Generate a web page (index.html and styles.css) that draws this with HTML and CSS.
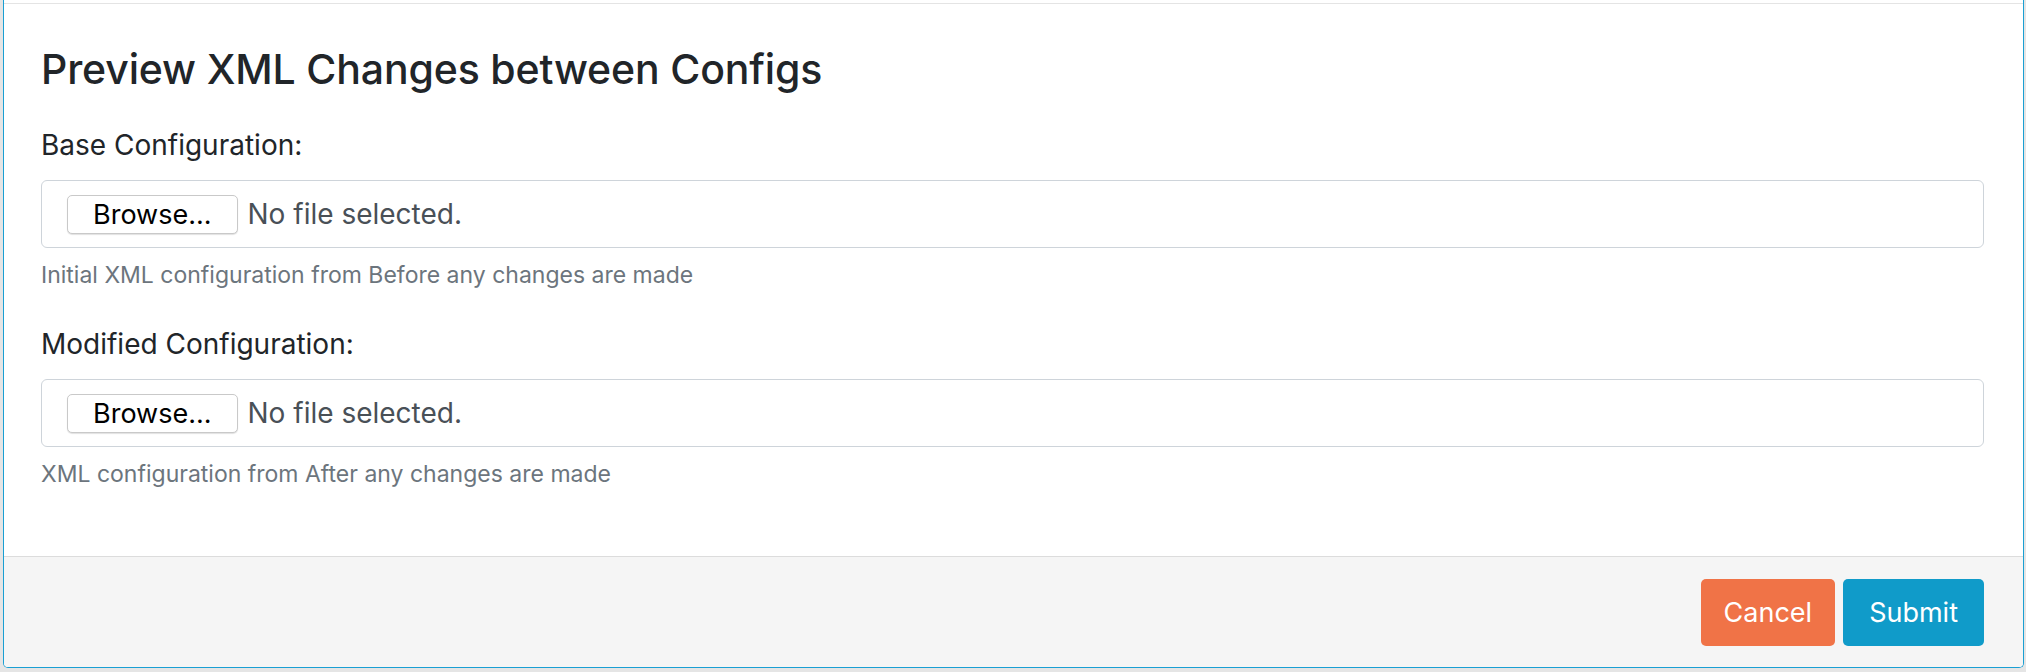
FILE: index.html
```html
<!DOCTYPE html>
<html lang="en">
<head>
<meta charset="utf-8">
<title>Preview XML Changes between Configs</title>
<link rel="stylesheet" href="styles.css">
</head>
<body>
<div class="modal">
  <div class="modal-top"></div>
  <div class="modal-body">
    <h5 class="modal-title">Preview XML Changes between Configs</h5>
    <div class="form-group">
      <label class="label">Base Configuration:</label>
      <div class="file-box">
        <span class="browse">Browse...</span>
        <span class="file-name">No file selected.</span>
      </div>
      <div class="help">Initial XML configuration from Before any changes are made</div>
    </div>
    <div class="form-group">
      <label class="label">Modified Configuration:</label>
      <div class="file-box">
        <span class="browse">Browse...</span>
        <span class="file-name">No file selected.</span>
      </div>
      <div class="help">XML configuration from After any changes are made</div>
    </div>
  </div>
  <div class="modal-footer">
    <button class="btn btn-cancel">Cancel</button>
    <button class="btn btn-submit">Submit</button>
  </div>
</div>
</body>
</html>
```

FILE: styles.css
```css
* { box-sizing: border-box; }
html, body {
  margin: 0;
  padding: 0;
  background: #e5e5e5;
  font-family: Inter, "Noto Sans", "Liberation Sans", sans-serif;
  color: #212529;
}
.modal {
  margin-left: 3px;
  width: 2021px;
  background: #fff;
  border-left: 1px solid #1a9fd3;
  border-right: 1px solid #1a9fd3;
  border-bottom: 1px solid #1a9fd3;
  border-radius: 0 0 5px 5px;
  overflow: hidden;
}
.modal-top {
  height: 4px;
  border-bottom: 1px solid #e4e4e4;
}
.modal-body {
  padding: 41px 39px 65px 37px;
}
.modal-title {
  margin: 0 0 30px;
  font-size: 41px;
  font-weight: 500;
  line-height: 49px;
  letter-spacing: -0.15px;
  color: #212529;
}
.form-group {
  margin-bottom: 31px;
}
.form-group:last-child { margin-bottom: 0; }
.label {
  display: block;
  font-size: 28px;
  line-height: 42px;
  margin-bottom: 14px;
  color: #212529;
}
.file-box {
  height: 68px;
  border: 1px solid #ced4da;
  border-radius: 6px;
  display: flex;
  align-items: center;
  padding-left: 25px;
  gap: 10px;
}
.browse {
  height: 39px;
  padding: 0 25px;
  border: 1px solid #c9c9c9;
  border-radius: 5px;
  background: #fff;
  box-shadow: 0 1px 1px rgba(0,0,0,0.12);
  font-size: 27px;
  line-height: 37px;
  color: #000;
}
.file-name {
  font-size: 28px;
  color: #495057;
}
.help {
  margin-top: 10px;
  font-size: 23px;
  line-height: 34px;
  color: #6c757d;
}
.modal-footer {
  background: #f5f5f5;
  border-top: 1px solid #dcdcdc;
  padding: 22px 39px 21px 37px;
  display: flex;
  justify-content: flex-end;
  gap: 8px;
}
.btn {
  height: 67px;
  padding: 0 23px;
  border: none;
  border-radius: 5px;
  font-family: inherit;
  font-size: 27px;
  color: #fff;
}
.btn-cancel { background: #f07347; }
.btn-submit { background: #109bc9; padding: 0 26px; }
```
